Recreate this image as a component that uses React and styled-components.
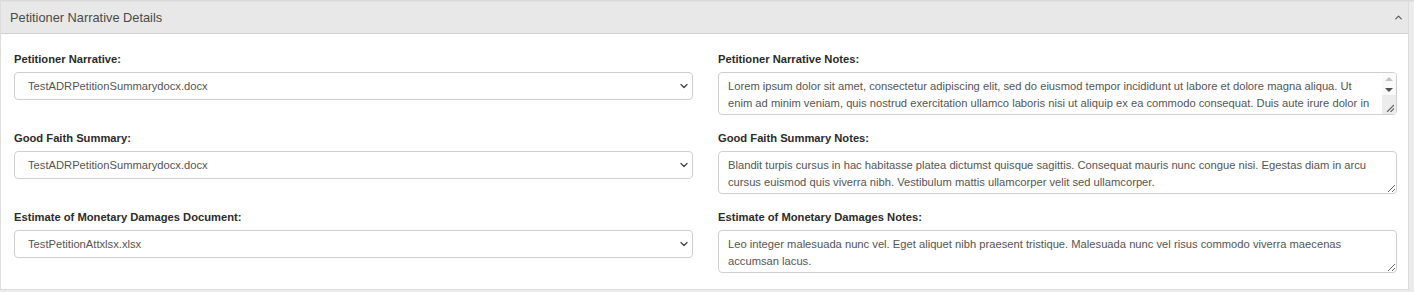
import React from 'react'
import styled, { createGlobalStyle } from 'styled-components'
import { ChevronDown, ChevronUp } from 'lucide-react'

const GlobalStyle = createGlobalStyle`
    html, body {
        margin: 0;
        padding: 0;
        background: #ececec;
        font-family: 'Liberation Sans', Arial, sans-serif;
    }
`

const Page = styled.div`
    width: 1414px;
    height: 292px;
    padding-top: 2px;
    box-sizing: border-box;
    background: linear-gradient(#d6d6d6, #ececec 3px);
`

const Panel = styled.section`
    width: 1409px;
    height: 288px;
    background: #fff;
    border: 1px solid #dcdcdc;
    border-top: none;
    box-sizing: border-box;
`

const Header = styled.div`
    height: 32px;
    display: flex;
    align-items: center;
    justify-content: space-between;
    padding: 0 4px 0 9px;
    background: #e8e8e8;
    border-bottom: 1px solid #cfcfcf;
    box-sizing: border-box;
    color: #4a4a4a;
    font-size: 12.8px;
`

const Body = styled.div`
    display: grid;
    grid-template-columns: 679px 679px;
    column-gap: 25px;
    row-gap: 16px;
    padding: 18px 12px 16px 13px;
`

const Field = styled.div`
    display: flex;
    flex-direction: column;
    gap: 6px;
`

const Label = styled.label`
    font-size: 11.2px;
    font-weight: bold;
    color: #2b2b2b;
    line-height: 14px;
`

const SelectWrap = styled.div`
    position: relative;
    height: 28px;
    color: #444;
    svg {
        position: absolute;
        right: 3px;
        top: 8px;
        pointer-events: none;
    }
`

const Select = styled.select`
    appearance: none;
    width: 100%;
    height: 28px;
    border: 1px solid #cfcfcf;
    border-radius: 4px;
    background: #fff;
    padding: 0 13px;
    font-family: inherit;
    font-size: 11.2px;
    color: #555;
    outline: none;
`

const NotesWrap = styled.div`
    position: relative;
    height: 43px;
`

const Notes = styled.textarea`
    display: block;
    width: 100%;
    height: 43px;
    box-sizing: border-box;
    border: 1px solid #cfcfcf;
    border-radius: 4px;
    padding: 5px ${p => (p.$scroll ? '24px' : '9px')} 5px 9px;
    font-family: inherit;
    font-size: 11.2px;
    line-height: 17px;
    color: #555;
    resize: vertical;
    outline: none;
    overflow: hidden;
`

const ScrollBar = styled.div`
    position: absolute;
    right: 1px;
    top: 1px;
    bottom: 1px;
    width: 14px;
    display: flex;
    flex-direction: column;
    pointer-events: none;
    border-radius: 0 3px 3px 0;
    overflow: hidden;
`

const ScrollButton = styled.div`
    height: 11px;
    background: #fafafa;
    display: flex;
    align-items: center;
    justify-content: center;
`

const Track = styled.div`
    flex: 1;
    background: #ececec;
`

const Arrow = styled.span`
    width: 0;
    height: 0;
    border-left: 4px solid transparent;
    border-right: 4px solid transparent;
    ${p => (p.$up
        ? 'border-bottom: 4px solid #c2c2c2;'
        : 'border-top: 4px solid #505050;')}
`

const Grip = styled.svg`
    position: absolute;
    right: 2px;
    bottom: 2px;
`

const rows = [
    {
        label: 'Petitioner Narrative:',
        file: 'TestADRPetitionSummarydocx.docx',
        notesLabel: 'Petitioner Narrative Notes:',
        notes: 'Lorem ipsum dolor sit amet, consectetur adipiscing elit, sed do eiusmod tempor incididunt ut labore et dolore magna aliqua. Ut enim ad minim veniam, quis nostrud exercitation ullamco laboris nisi ut aliquip ex ea commodo consequat. Duis aute irure dolor in reprehenderit in voluptate velit esse cillum dolore eu fugiat nulla pariatur. Excepteur sint occaecat cupidatat non proident, sunt in culpa qui officia deserunt mollit anim id est laborum.',
        scroll: true
    },
    {
        label: 'Good Faith Summary:',
        file: 'TestADRPetitionSummarydocx.docx',
        notesLabel: 'Good Faith Summary Notes:',
        notes: 'Blandit turpis cursus in hac habitasse platea dictumst quisque sagittis. Consequat mauris nunc congue nisi. Egestas diam in arcu cursus euismod quis viverra nibh. Vestibulum mattis ullamcorper velit sed ullamcorper.'
    },
    {
        label: 'Estimate of Monetary Damages Document:',
        file: 'TestPetitionAttxlsx.xlsx',
        notesLabel: 'Estimate of Monetary Damages Notes:',
        notes: 'Leo integer malesuada nunc vel. Eget aliquet nibh praesent tristique. Malesuada nunc vel risus commodo viverra maecenas accumsan lacus.'
    }
]

const App = () => (
    <Page>
        <GlobalStyle />
        <Panel>
            <Header>
                <span>Petitioner Narrative Details</span>
                <ChevronUp size={11} strokeWidth={2.5} color="#555" />
            </Header>
            <Body>
                {rows.map(r => (
                    <React.Fragment key={r.label}>
                        <Field>
                            <Label>{r.label}</Label>
                            <SelectWrap>
                                <Select defaultValue={r.file}>
                                    <option>{r.file}</option>
                                </Select>
                                <ChevronDown size={12} strokeWidth={2.5} />
                            </SelectWrap>
                        </Field>
                        <Field>
                            <Label>{r.notesLabel}</Label>
                            <NotesWrap>
                                <Notes $scroll={r.scroll} defaultValue={r.notes} />
                                {r.scroll && (
                                    <ScrollBar>
                                        <ScrollButton><Arrow $up /></ScrollButton>
                                        <ScrollButton><Arrow /></ScrollButton>
                                        <Track />
                                        <Grip width="8" height="8" viewBox="0 0 8 8">
                                            <path d="M1 8 L8 1 M4.5 8 L8 4.5" stroke="#666" strokeWidth="1.2" />
                                        </Grip>
                                    </ScrollBar>
                                )}
                            </NotesWrap>
                        </Field>
                    </React.Fragment>
                ))}
            </Body>
        </Panel>
    </Page>
)

export default App
